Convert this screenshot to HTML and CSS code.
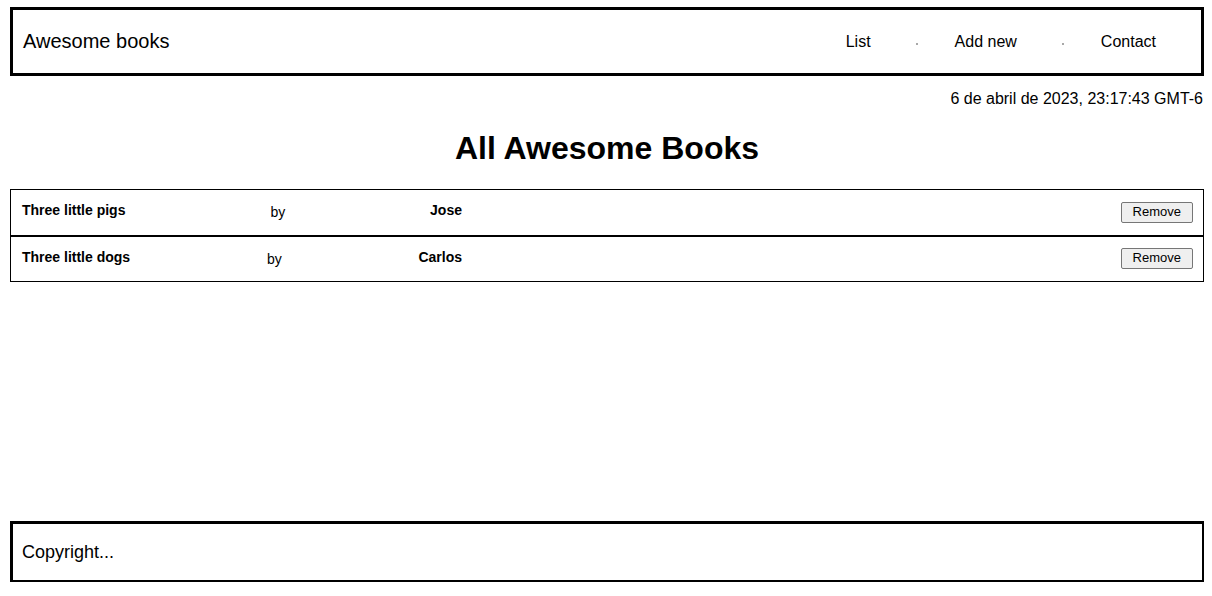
FILE: index.html
```html
<!DOCTYPE html>
<html lang="en">
<head>
<meta charset="utf-8">
<title>Awesome books</title>
<link rel="stylesheet" href="styles.css">
</head>
<body>
<div class="page">
  <header class="topbar">
    <div class="brand">Awesome books</div>
    <nav class="nav">
      <a class="nav-link" href="#">List</a>
      <span class="nav-dot"></span>
      <a class="nav-link" href="#">Add new</a>
      <span class="nav-dot"></span>
      <a class="nav-link" href="#">Contact</a>
    </nav>
  </header>
  <div class="date">6 de abril de 2023, 23:17:43 GMT-6</div>
  <h1 class="title">All Awesome Books</h1>
  <ul class="books">
    <li class="book">
      <div class="book-info">
        <span class="book-title">Three little pigs</span>
        <span class="book-by">by</span>
        <span class="book-author">Jose</span>
      </div>
      <button class="remove" type="button">Remove</button>
    </li>
    <li class="book">
      <div class="book-info">
        <span class="book-title">Three little dogs</span>
        <span class="book-by">by</span>
        <span class="book-author">Carlos</span>
      </div>
      <button class="remove" type="button">Remove</button>
    </li>
  </ul>
  <footer class="footer">Copyright...</footer>
</div>
</body>
</html>
```

FILE: styles.css
```css
html, body {
  margin: 0;
  padding: 0;
}

body {
  font-family: "Liberation Sans", Arial, sans-serif;
  color: #000;
  background: #fff;
}

.page {
  min-height: 100vh;
  box-sizing: border-box;
  padding: 7px 8px 14px 10px;
  display: flex;
  flex-direction: column;
}

.topbar {
  height: 69px;
  box-sizing: border-box;
  border: 3px solid #000;
  display: flex;
  align-items: center;
  justify-content: space-between;
  padding: 0 45px 0 10px;
}

.brand {
  font-size: 20px;
}

.nav {
  display: flex;
  align-items: center;
  padding-top: 1px;
}

.nav-link {
  font-size: 16px;
  color: #000;
  text-decoration: none;
}

.nav-dot {
  width: 2px;
  height: 2px;
  background: #a8a8a8;
  margin: 3px 37px 0 45px;
}

.date {
  margin-top: 14px;
  font-size: 16px;
  line-height: 18px;
  text-align: right;
  padding-right: 1px;
}

.title {
  margin: 22px 0 23px;
  font-size: 32px;
  line-height: 36px;
  font-weight: bold;
  text-align: center;
}

.books {
  list-style: none;
  margin: 0;
  padding: 0;
}

.book {
  height: 46.5px;
  box-sizing: border-box;
  border: 1px solid #000;
  display: flex;
  align-items: center;
  padding: 0 10px 0 11px;
}

.book-info {
  width: 440px;
  display: flex;
  align-items: center;
  justify-content: space-between;
  font-size: 14px;
}

.book-title,
.book-author {
  font-weight: bold;
  padding-bottom: 4px;
}

.remove {
  margin-left: auto;
  font-family: "Liberation Sans", Arial, sans-serif;
  font-size: 13px;
  line-height: 16px;
  padding: 1px 11px 2px;
  color: #000;
  background: #efefef;
  border: 1px solid #767676;
  border-radius: 2px;
}

.footer {
  margin-top: auto;
  height: 61px;
  box-sizing: border-box;
  border-style: solid;
  border-color: #000;
  border-width: 3px 2px 2px 3px;
  display: flex;
  align-items: center;
  padding-left: 9px;
  font-size: 18px;
}
```
